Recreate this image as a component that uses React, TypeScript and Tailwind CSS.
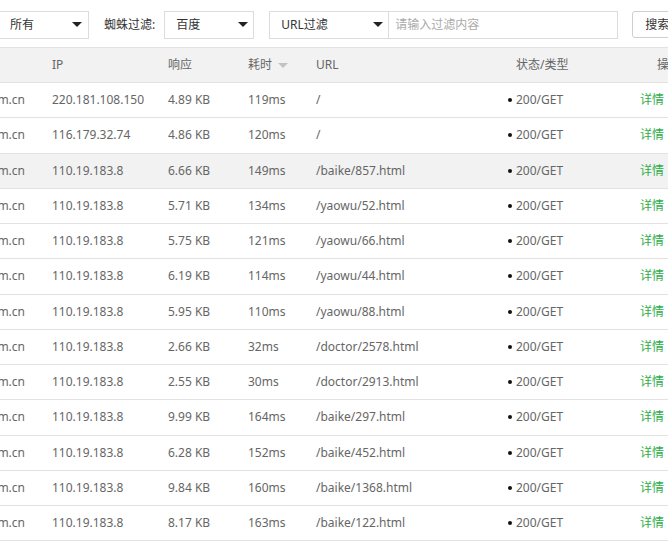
import React from "react";

type Row = { ip: string; size: string; time: string; url: string };

const rows: Row[] = [
  { ip: "220.181.108.150", size: "4.89 KB", time: "119ms", url: "/" },
  { ip: "116.179.32.74", size: "4.86 KB", time: "120ms", url: "/" },
  { ip: "110.19.183.8", size: "6.66 KB", time: "149ms", url: "/baike/857.html" },
  { ip: "110.19.183.8", size: "5.71 KB", time: "134ms", url: "/yaowu/52.html" },
  { ip: "110.19.183.8", size: "5.75 KB", time: "121ms", url: "/yaowu/66.html" },
  { ip: "110.19.183.8", size: "6.19 KB", time: "114ms", url: "/yaowu/44.html" },
  { ip: "110.19.183.8", size: "5.95 KB", time: "110ms", url: "/yaowu/88.html" },
  { ip: "110.19.183.8", size: "2.66 KB", time: "32ms", url: "/doctor/2578.html" },
  { ip: "110.19.183.8", size: "2.55 KB", time: "30ms", url: "/doctor/2913.html" },
  { ip: "110.19.183.8", size: "9.99 KB", time: "164ms", url: "/baike/297.html" },
  { ip: "110.19.183.8", size: "6.28 KB", time: "152ms", url: "/baike/452.html" },
  { ip: "110.19.183.8", size: "9.84 KB", time: "160ms", url: "/baike/1368.html" },
  { ip: "110.19.183.8", size: "8.17 KB", time: "163ms", url: "/baike/122.html" },
];

function Caret({ className = "" }: { className?: string }) {
  return (
    <svg width="10" height="5" viewBox="0 0 10 5" className={className}>
      <path d="M0 0 L10 0 L5 5 Z" fill="currentColor" />
    </svg>
  );
}

export default function App() {
  return (
    <div
      className="w-[668px] h-[541px] overflow-hidden bg-white text-[12px] text-[#666]"
      style={{ fontFamily: '"Noto Sans", "Noto Sans CJK SC", sans-serif' }}
    >
      {/* filter bar */}
      <div className="flex items-center h-[47px] pt-[2px] whitespace-nowrap">
        <div className="-ml-[20px] w-[109px] h-[28px] shrink-0 border border-[#dcdcdc] flex items-center justify-between pl-[29px] pr-[6px] text-[#333]">
          <span>所有</span>
          <Caret className="text-[#222]" />
        </div>
        <span className="ml-[15px] shrink-0 text-[#333]">蜘蛛过滤:</span>
        <div className="ml-[9px] w-[90px] h-[28px] shrink-0 border border-[#dcdcdc] flex items-center justify-between pl-[11px] pr-[5px] text-[#333]">
          <span>百度</span>
          <Caret className="text-[#222]" />
        </div>
        <div className="ml-[15px] flex h-[28px] shrink-0">
          <div className="w-[120px] h-full shrink-0 border border-[#dcdcdc] flex items-center justify-between pl-[11px] pr-[5px] text-[#333]">
            <span>URL过滤</span>
            <Caret className="text-[#222]" />
          </div>
          <div className="w-[229px] h-full shrink-0 border border-l-0 border-[#dcdcdc] flex items-center pl-[6px] text-[#aaa]">
            请输入过滤内容
          </div>
        </div>
        <div className="ml-[14px] h-[27px] w-[60px] shrink-0 border border-[#cfcfcf] rounded-[3px] flex items-center pl-[12px] text-[#333]">
          搜索
        </div>
      </div>

      {/* table */}
      <div className="border-t border-[#e2e2e2]">
        <div className="flex items-center h-[35px] bg-[#f2f2f2] border-b border-[#e2e2e2] whitespace-nowrap">
          <div className="w-[52px] shrink-0" />
          <div className="w-[116px] shrink-0">IP</div>
          <div className="w-[80px] shrink-0">响应</div>
          <div className="w-[68px] shrink-0 flex items-center gap-[6px]">
            耗时
            <Caret className="text-[#c2c2c2]" />
          </div>
          <div className="w-[200px] shrink-0">URL</div>
          <div className="w-[141px] shrink-0">状态/类型</div>
          <div className="shrink-0">操作</div>
        </div>
        {rows.map((r, i) => (
          <div
            key={i}
            className={`flex items-center h-[35.25px] border-b border-[#e2e2e2] whitespace-nowrap ${
              i === 2 ? "bg-[#f2f2f2]" : ""
            }`}
          >
            <div className="w-[52px] shrink-0 overflow-hidden flex justify-end pr-[27px]">
              <span>www.yaodian.com.cn</span>
            </div>
            <div className="w-[116px] shrink-0">{r.ip}</div>
            <div className="w-[80px] shrink-0">{r.size}</div>
            <div className="w-[68px] shrink-0">{r.time}</div>
            <div className="w-[192px] shrink-0">{r.url}</div>
            <div className="w-[132px] shrink-0 flex items-center">
              <span className="w-[4px] h-[4px] rounded-full bg-[#111] mr-[4px]" />
              200/GET
            </div>
            <div className="shrink-0 text-[#2eae48]">详情</div>
          </div>
        ))}
      </div>
    </div>
  );
}
